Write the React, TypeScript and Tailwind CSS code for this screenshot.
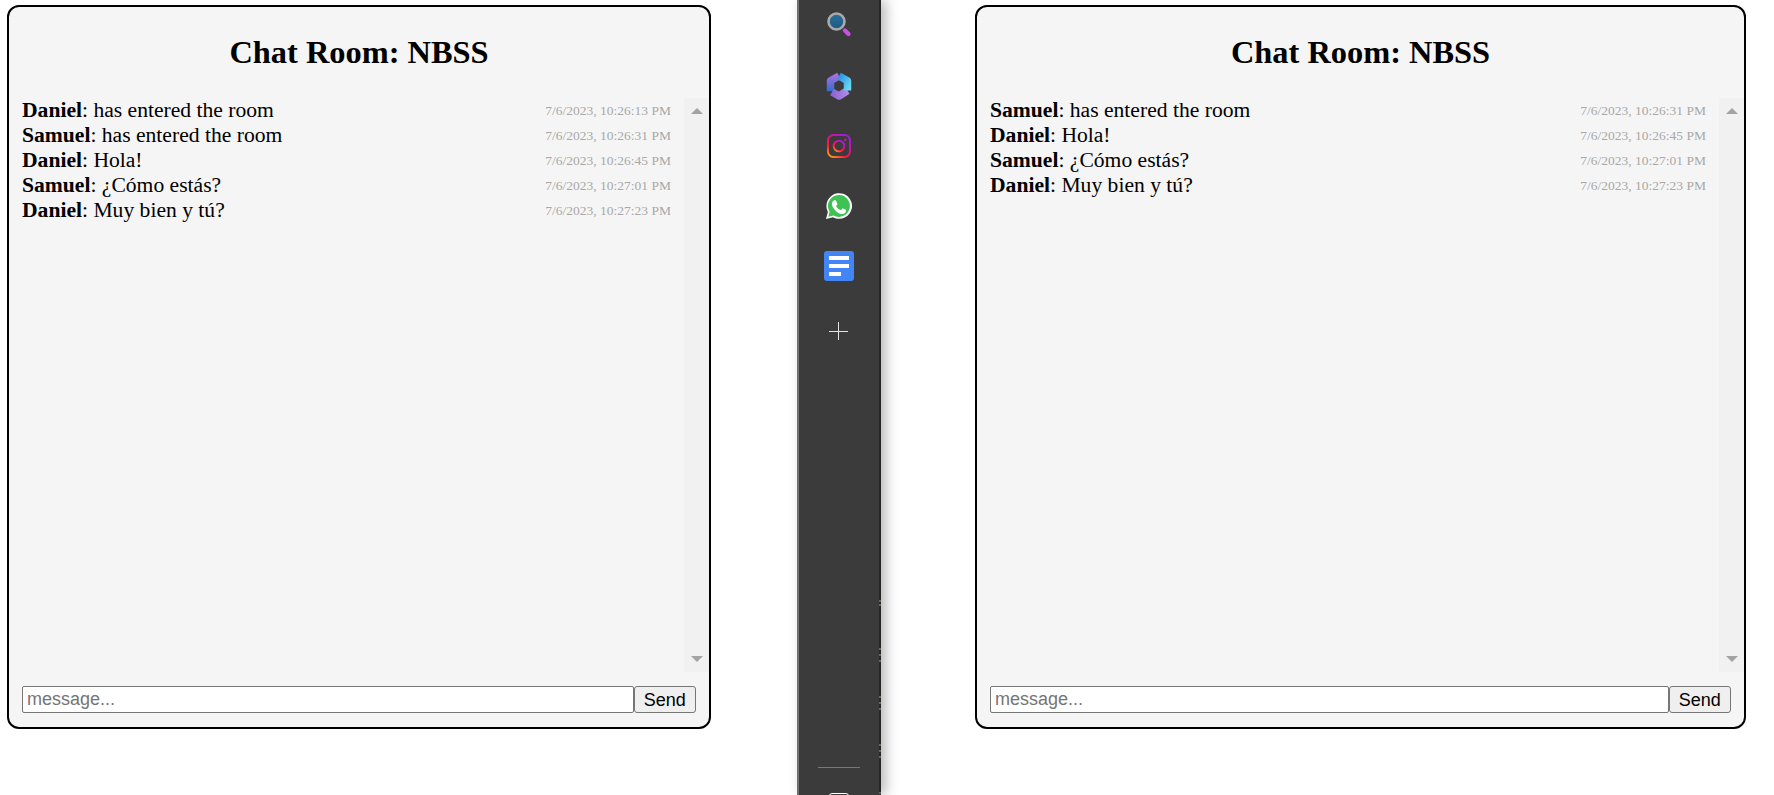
import React from "react";

type Message = {
  user: string;
  text: string;
  time: string;
};

const leftMessages: Message[] = [
  { user: "Daniel", text: "has entered the room", time: "7/6/2023, 10:26:13 PM" },
  { user: "Samuel", text: "has entered the room", time: "7/6/2023, 10:26:31 PM" },
  { user: "Daniel", text: "Hola!", time: "7/6/2023, 10:26:45 PM" },
  { user: "Samuel", text: "¿Cómo estás?", time: "7/6/2023, 10:27:01 PM" },
  { user: "Daniel", text: "Muy bien y tú?", time: "7/6/2023, 10:27:23 PM" },
];

const rightMessages = leftMessages.slice(1);

// little marks on the right edge of the sidebar
const edgeMarks = [600, 604, 648, 654, 660, 696, 702, 708, 744, 750, 756, 792];

const SearchIcon = () => (
  <svg width="28" height="28" viewBox="0 0 28 28">
    <defs>
      <linearGradient id="lens" x1="0" y1="0" x2="0" y2="1">
        <stop offset="0" stopColor="#2c6e9b" />
        <stop offset="1" stopColor="#1d5a80" />
      </linearGradient>
    </defs>
    <circle cx="11.500" cy="9.500" r="8" fill="url(#lens)" stroke="#a9aaa8" strokeWidth="2.6" />
    <path d="M20 18.500l3.500 3.500" stroke="#c94fe6" strokeWidth="4.2" strokeLinecap="round" />
  </svg>
);

const CopilotIcon = () => (
  <svg width="26" height="28" viewBox="0 0 26 28" fill="none" strokeWidth="7.5" strokeLinejoin="round">
    <defs>
      <linearGradient id="cpA" x1="0" y1="0" x2="1" y2="1">
        <stop offset="0" stopColor="#2f8fe4" />
        <stop offset="1" stopColor="#66d8f4" />
      </linearGradient>
      <linearGradient id="cpB" x1="0" y1="0" x2="1" y2="0">
        <stop offset="0" stopColor="#8a63d2" />
        <stop offset="1" stopColor="#b48ae6" />
      </linearGradient>
      <linearGradient id="cpC" x1="0" y1="0" x2="0" y2="1">
        <stop offset="0" stopColor="#a070dc" />
        <stop offset="1" stopColor="#2f6fd0" />
      </linearGradient>
    </defs>
    <path d="M4.500 19.300V8.700L13 4" stroke="url(#cpC)" />
    <path d="M21.500 18.500L13 24 6 20" stroke="url(#cpB)" />
    <path d="M13 4l8.500 4.700v9.800" stroke="url(#cpA)" />
  </svg>
);

const InstagramIcon = () => (
  <svg width="24" height="24" viewBox="0 0 24 24" fill="none">
    <defs>
      <linearGradient id="ig" x1="0" y1="1" x2="0.7" y2="0">
        <stop offset="0" stopColor="#fdb310" />
        <stop offset="0.35" stopColor="#f5213a" />
        <stop offset="0.7" stopColor="#d6119a" />
        <stop offset="1" stopColor="#a51bd8" />
      </linearGradient>
    </defs>
    <rect x="1" y="1" width="22" height="22" rx="5.500" stroke="url(#ig)" strokeWidth="2" />
    <circle cx="12" cy="12" r="5.300" stroke="url(#ig)" strokeWidth="2" />
    <circle cx="18.300" cy="5.700" r="1.300" fill="#c8189f" />
  </svg>
);

const WhatsappIcon = () => (
  <svg width="28" height="28" viewBox="0 0 28 28">
    <path d="M1 27l1.900-7A12.800 12.800 0 1 1 8 25.200z" fill="#fff" />
    <path d="M3.300 24.700l1.300-4.900A11 11 0 1 1 8.500 23.500z" fill="#3fc254" />
    <path
      d="M10.200 7.800c-.4-.9-.8-.9-1.200-.9h-1c-.4 0-.9.200-1.400.7-.5.500-1.800 1.800-1.800 4.300s1.900 5 2.100 5.300c.3.300 3.600 5.700 8.800 7.300 1 .3 3 .3 4-.1 1.200-.4 2.600-1.600 2.900-2.700.3-1.100.3-2 .2-2.200-.1-.2-.4-.3-.8-.5l-3-1.500c-.4-.1-.7-.2-1 .2l-1.300 1.700c-.2.300-.5.300-.9.100-.4-.2-1.800-.7-3.300-2-1.200-1.100-2-2.400-2.300-2.800-.2-.4 0-.6.200-.8l.9-1.100c.2-.3.300-.5.400-.8.100-.3.100-.6 0-.8z"
      fill="#fff"
      transform="translate(3.200 2.800) scale(0.78)"
    />
  </svg>
);

const DocIcon = () => (
  <div className="flex h-[30px] w-[30px] flex-col gap-[4px] rounded-[3px] bg-[#4285f4] px-[5px] py-[5px]">
    <div className="h-[4px] w-[20px] bg-white" />
    <div className="h-[4px] w-[20px] bg-white" />
    <div className="h-[4px] w-[12px] bg-white" />
  </div>
);

const PlusIcon = () => (
  <svg width="20" height="20" viewBox="0 0 20 20" stroke="#e4e4e4" strokeWidth="1">
    <path d="M9.500 1v18M0 10.500h19" />
  </svg>
);

const sidebarIcons = [
  <SearchIcon key="search" />,
  <CopilotIcon key="copilot" />,
  <InstagramIcon key="instagram" />,
  <WhatsappIcon key="whatsapp" />,
  <DocIcon key="doc" />,
];

const Sidebar = () => (
  <aside className="relative flex h-[795px] w-[84px] shrink-0 flex-col items-center border-r-2 border-l-2 border-r-[#262626] border-l-[#6f6f6f] bg-[#3b3b3b] shadow-[5px_0_12px_rgba(0,0,0,0.28)]">
    <div className="mt-[-4px] flex flex-col items-center">
      {sidebarIcons.map((icon, i) => (
        <div key={i} className="flex h-[60px] w-[60px] items-center justify-center">
          {icon}
        </div>
      ))}
      <div className="mt-[5px] flex h-[60px] w-[60px] items-center justify-center">
        <PlusIcon />
      </div>
    </div>
    <div className="mt-auto mb-[27px] h-px w-[42px] bg-[#777777]" />
    <div className="absolute bottom-[-6px] left-[30px] h-[8px] w-[20px] rounded-t-[3px] border border-white" />
    {edgeMarks.map((y) => (
      <div key={y} className="absolute right-[-2px] h-[2px] w-[2px] bg-[#6b6558]" style={{ top: y }} />
    ))}
  </aside>
);

const ChatRoom = ({ messages, className }: { messages: Message[]; className: string }) => (
  <section
    className={`flex h-[724px] shrink-0 flex-col rounded-[12px] border-2 border-black bg-[#f5f5f5] ${className}`}
  >
    <h2 className="mt-[27px] mb-[27px] h-[37px] text-center text-[32.4px] leading-[37px] font-bold text-black">
      Chat Room: NBSS
    </h2>
    <div className="flex h-[574px] pl-[13px]">
      <ul className="min-w-0 flex-1 pr-[13px]">
        {messages.map((m) => (
          <li key={m.time} className="flex h-[25px] items-center justify-between text-[21.6px] leading-[25px] text-black">
            <span>
              <strong>{m.user}</strong>: {m.text}
            </span>
            <span className="text-[13.5px] text-[#a8a8a8]">{m.time}</span>
          </li>
        ))}
      </ul>
      <div className="flex w-[25px] flex-col items-center justify-between bg-[#f1f1f1] py-[10px]">
        <div className="h-0 w-0 border-r-[6px] border-b-[6px] border-l-[6px] border-r-transparent border-b-[#a3a3a3] border-l-transparent" />
        <div className="h-0 w-0 border-t-[6px] border-r-[6px] border-l-[6px] border-t-[#a3a3a3] border-r-transparent border-l-transparent" />
      </div>
    </div>
    <form className="mt-[14px] flex h-[27px] px-[13px] font-['Liberation_Sans',sans-serif] text-[18px]">
      <input
        placeholder="message..."
        className="h-[27px] min-w-0 flex-1 rounded-[2px] border border-[#767676] bg-white px-[4px] leading-none placeholder:text-[#757575]"
      />
      <button
        type="button"
        className="h-[27px] w-[62.5px] rounded-[3px] border border-[#767676] bg-[#efefef] leading-none text-black"
      >
        Send
      </button>
    </form>
  </section>
);

export default function App() {
  return (
    <div className="flex h-[795px] w-[1774px] items-start overflow-hidden bg-white pl-[7px] font-['Liberation_Serif',serif]">
      <ChatRoom messages={leftMessages} className="mt-[5px] w-[704px]" />
      <div className="ml-[86px]">
        <Sidebar />
      </div>
      <ChatRoom messages={rightMessages} className="mt-[5px] ml-[94px] w-[771px]" />
    </div>
  );
}
